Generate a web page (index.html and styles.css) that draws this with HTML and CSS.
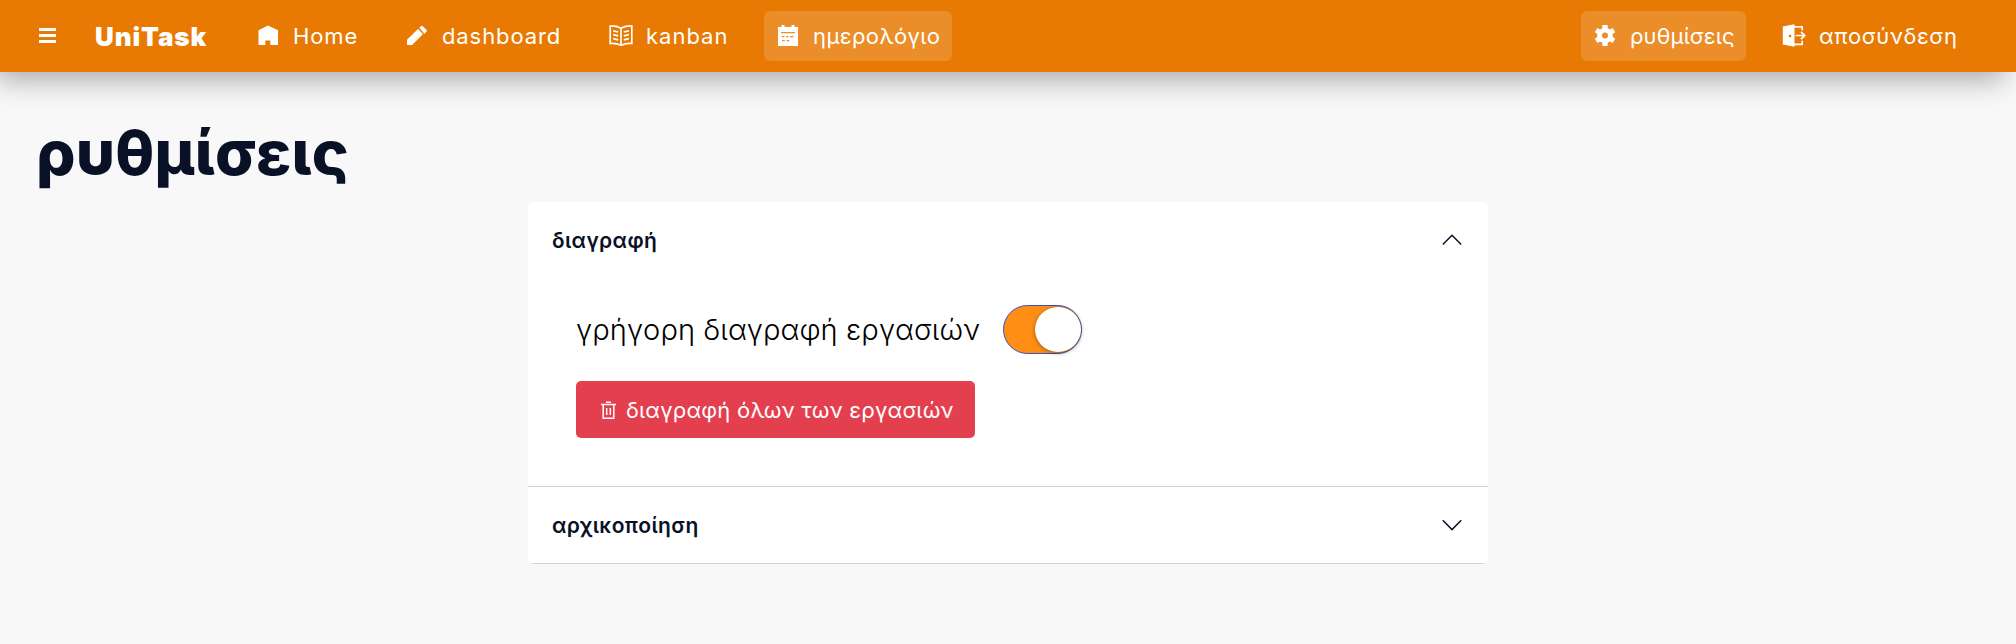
FILE: index.html
```html
<!DOCTYPE html>
<html lang="el">
<head>
<meta charset="utf-8">
<title>UniTask</title>
<link rel="stylesheet" href="styles.css">
</head>
<body>
<nav class="navbar">
  <svg class="menu" width="17" height="16" viewBox="0 0 17 16"><path d="M0 1.500h17M0 7.500h17M0 13.500h17" stroke="#fff" stroke-width="2.800"/></svg>
  <span class="brand">UniTask</span>
  <a class="item home"><svg class="icon" viewBox="0 0 24 24"><path d="M12 1.5 2.500 6.2V21h6.800v-4.500h5V21H22V6.200z"/></svg><span>Home</span></a>
  <a class="item dashboard"><svg class="icon" viewBox="0 0 24 24"><path d="M2 21v-5.200L13 4.900l5 5L7.200 21zM14.200 3.800l1.600-1.600q1-1 2 0l3.600 3.600q1 1 0 2l-2 2z"/></svg><span>dashboard</span></a>
  <a class="item kanban"><svg class="icon line" viewBox="0 0 24 24"><path d="M12 4.200Q7 1.600 1.200 2v17.500Q7 19 12 21.300 17 19 22.800 19.500V2Q17 1.600 12 4.200v17M4.200 6.800l5 1.200M4.200 10.700l5 1.200M4.200 14.600l5 1.200M19.800 6.800l-5 1.200M19.800 10.700l-5 1.200M19.800 14.600l-5 1.200"/></svg><span>kanban</span></a>
  <a class="item calendar active"><svg class="icon" viewBox="0 0 24 24"><path fill-rule="evenodd" d="M2 3h3.500V1h3v2h7V1h3v2H22v19H2zM5 8v1.300h14V8zM6 12v1.200h2.500V12zM10 12v1.200h2.500V12zM14 12v1.200h3.500V12zM6 16v1.200h2.800V16zM10.500 16v1.200h2.800V16z"/></svg><span>ημερολόγιο</span></a>
  <a class="item settings active"><svg class="icon" viewBox="0 0 24 24"><path fill-rule="evenodd" d="M9.300 1h5.400v3.200l2.300 1.300 2.700-1.600 2.500 4.300-2.500 1.700v3.200l2.500 1.700-2.500 4.300-2.700-1.600-2.300 1.300V22H9.300v-3.200L7 17.500l-2.700 1.600-2.500-4.300 2.500-1.700V9.900L1.800 8.200l2.500-4.300L7 5.500l2.300-1.300zM12 8.500a3 3 0 1 0 0 6 3 3 0 0 0 0-6z"/></svg><span>ρυθμίσεις</span></a>
  <a class="item logout"><svg class="icon" viewBox="0 0 24 24"><path fill-rule="evenodd" d="M.8 2.600 12.500.3v22.400L.8 20.400zM8 10.700a1.400 1.400 0 1 0 0 2.800 1.400 1.400 0 0 0 0-2.800z"/><path d="M12 2.800h8.200v3.500M20.200 16.800v3.500H12M13.500 11.500h9M19 7.800l3.700 3.700-3.700 3.700" fill="none" stroke="#fff" stroke-width="1.700"/></svg><span>αποσύνδεση</span></a>
</nav>
<main class="page">
  <h1 class="title">ρυθμίσεις</h1>
  <div class="accordion">
    <section class="panel">
      <header class="head"><span>διαγραφή</span><svg class="chevron" viewBox="0 0 20 20"><path d="m.8 14.500 9.200-9.300 9.200 9.300"/></svg></header>
      <div class="body">
        <div class="option"><span class="label">γρήγορη διαγραφή εργασιών</span><span class="toggle"><span class="knob"></span></span></div>
        <button class="danger"><svg class="trash" viewBox="0 0 15 18"><path d="M0 3.500h15M5 1.200h5M2.200 3.500v13.700h10.600V3.500M5.700 7v7M9.300 7v7"/></svg><span>διαγραφή όλων των εργασιών</span></button>
      </div>
    </section>
    <section class="panel">
      <header class="head"><span>αρχικοποίηση</span><svg class="chevron" viewBox="0 0 20 20"><path d="m.8 5.300 9.200 9.300 9.200-9.300"/></svg></header>
    </section>
  </div>
</main>
</body>
</html>
```
FILE: styles.css
```css
* { box-sizing: border-box; }
body {
  margin: 0;
  min-height: 644px;
  background: #f8f8f8;
  color: #081126;
  font-family: Inter, "Open Sans", sans-serif;
  overflow: hidden;
}
.navbar {
  display: flex;
  align-items: center;
  height: 72px;
  padding: 0 48px 0 39px;
  background: #e87a03;
  color: #fff;
  box-shadow: -8px 12px 28px -4px rgba(0, 0, 0, .32);
}
.menu { flex: none; }
.brand {
  width: 148px;
  margin-left: 39px;
  font-size: 26px;
  font-weight: 900;
  letter-spacing: .9px;
}
.item {
  display: flex;
  align-items: center;
  gap: 13px;
  height: 50px;
  margin-right: 24px;
  padding: 0 12px;
  border-radius: 6px;
  font-size: 22px;
  white-space: nowrap;
}
.icon { width: 24px; height: 24px; flex: none; fill: #fff; }
.icon.line { fill: none; stroke: #fff; stroke-width: 1.7; }
.home { width: 125px; letter-spacing: .9px; margin-left: 1px; }
.dashboard { width: 180px; letter-spacing: .9px; }
.kanban { width: 143px; letter-spacing: 1px; }
.calendar { width: 188px; letter-spacing: .4px; }
.settings { width: 165px; margin-left: auto; letter-spacing: .15px; }
.logout { width: 198px; margin-right: 0; letter-spacing: .6px; }
.active { background: rgba(255, 255, 255, .15); }
.page { padding: 41px 36px 0; }
.title {
  margin: 0;
  height: 89px;
  font-size: 62px;
  line-height: 79px;
  font-weight: 800;
  letter-spacing: .2px;
}
.accordion {
  width: 960px;
  margin: 0 auto;
  border-radius: 5px;
  background: #fff;
  overflow: hidden;
}
.panel { border-bottom: 1px solid #ced1d6; }
.head {
  display: flex;
  align-items: center;
  justify-content: space-between;
  height: 76px;
  padding: 0 26px 0 24px;
  font-size: 21px;
  font-weight: 600;
  letter-spacing: .4px;
}
.chevron { width: 20px; height: 20px; fill: none; stroke: #081126; stroke-width: 1.5; }
.body { height: 208px; padding: 27px 48px 0; }
.option { display: flex; align-items: center; gap: 22px; color: #000; }
.label {
  width: 405px;
  padding-bottom: 1px;
  font-size: 29px;
  font-weight: 300;
  letter-spacing: .08px;
  white-space: nowrap;
}
.toggle {
  display: flex;
  justify-content: flex-end;
  width: 79px;
  height: 49px;
  padding: 1px 0;
  border: 1px solid #3a4fc8;
  border-radius: 25px;
  background: #ff8f14;
}
.knob {
  width: 46px;
  height: 45px;
  border-radius: 50%;
  background: #fff;
  box-shadow: 0 1px 4px rgba(0, 0, 0, .4);
}
.danger {
  display: flex;
  align-items: center;
  gap: 10px;
  width: 399px;
  height: 57px;
  margin-top: 27px;
  padding: 0 24px 0 25px;
  border: 0;
  border-radius: 5px;
  background: #e43f4f;
  color: #fff;
  font: 400 22px Inter, "Open Sans", sans-serif;
  letter-spacing: .22px;
  white-space: nowrap;
}
.trash { width: 15px; height: 18px; flex: none; fill: none; stroke: #fff; stroke-width: 1.5; }
```
